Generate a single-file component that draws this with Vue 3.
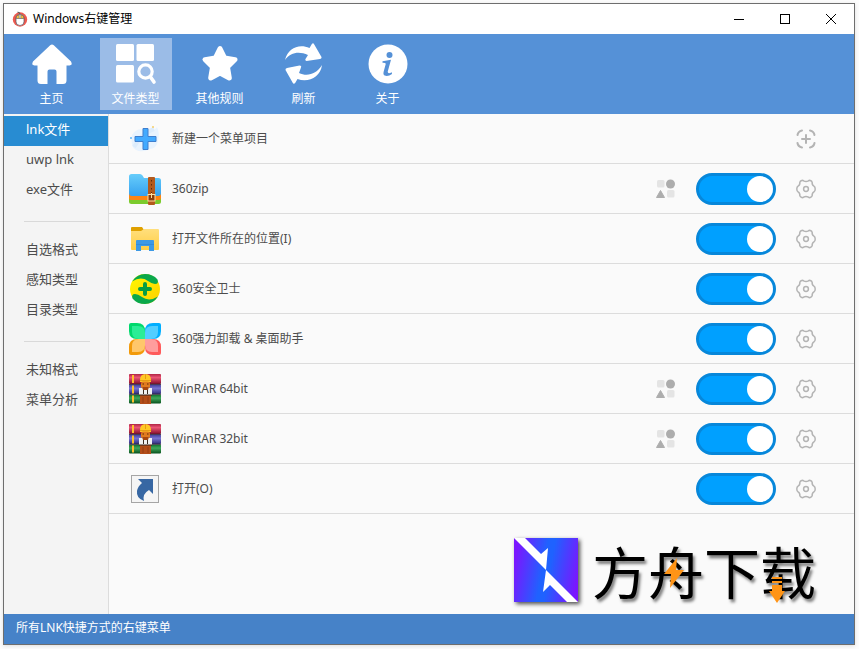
<template>
  <div class="desktop">
    <div class="window">
      <header class="titlebar">
        <svg class="app-icon" viewBox="0 0 16 16">
          <circle cx="8" cy="8.5" r="7.2" fill="#ee5a50" />
          <path d="M8 5V3Q8 1 5.5 1.2" fill="none" stroke="#555" stroke-width="1" />
          <rect x="4" y="3.6" width="8" height="10.800" rx="3.600" fill="#fff" stroke="#4d5560" stroke-width=".7" />
          <path d="M4.300 7.500V5.800Q4.800 4.100 6.600 4H9.400Q11.200 4.100 11.700 5.800V7.500z" fill="#f3bd3e" stroke="#4d5560" stroke-width=".6" />
          <rect x="7.200" y="3.600" width="1.600" height="3.800" rx=".8" fill="#fff" stroke="#4d5560" stroke-width=".5" />
        </svg>
        <h1 class="title">Windows右键管理</h1>
        <button class="win-btn" aria-label="最小化">
          <svg viewBox="0 0 12 12"><path d="M1 6.5h10" /></svg>
        </button>
        <button class="win-btn" aria-label="最大化">
          <svg viewBox="0 0 12 12"><rect x="1.5" y="1.5" width="9" height="9" /></svg>
        </button>
        <button class="win-btn" aria-label="关闭">
          <svg viewBox="0 0 12 12"><path d="M1 1l10 10M11 1L1 11" /></svg>
        </button>
      </header>

      <nav class="toolbar">
        <button
          v-for="tool in tools"
          :key="tool.id"
          class="tool"
          :class="{ active: activeTool === tool.id }"
          @click="activeTool = tool.id"
        >
          <svg viewBox="0 0 42 42">
            <path
              v-if="tool.id === 'home'"
              d="M19.2 2.2Q21 .6 22.8 2.2L40 18.6Q42 22.4 38.5 22.5H35.5V37.5Q35.5 41 32 41H25.5V28.5Q25.5 26.5 23.5 26.5H18.5Q16.5 26.5 16.5 28.5V41H10Q6.500 41 6.500 37.5V22.5H3.500Q0 22.400 2 18.600z"
              fill="#fff"
            />
            <g v-else-if="tool.id === 'types'" fill="#fff">
              <rect x="1" y="1" width="18" height="17" rx="1.500" />
              <rect x="21.500" y="1" width="17.500" height="17" rx="1.500" />
              <rect x="1" y="22" width="18" height="17.500" rx="1.500" />
              <circle cx="30.500" cy="28.500" r="6.700" fill="none" stroke="#fff" stroke-width="3.200" />
              <path d="M35.500 34l3.500 5" stroke="#fff" stroke-width="3.600" stroke-linecap="round" />
            </g>
            <path
              v-else-if="tool.id === 'rules'"
              d="M21 5.500l4.700 9.500 10.300 1.600-7.500 7.500 1.800 10.900-9.300-5-9.300 5 1.800-10.900-7.500-7.500 10.300-1.600z"
              fill="#fff"
              stroke="#fff"
              stroke-width="5"
              stroke-linejoin="round"
            />
            <g v-else-if="tool.id === 'refresh'" fill="#fff">
              <path d="M2 17C5 5.500 15.500 .5 26.500 5L29 .8Q30.300-.3 31.100 1.200L38.500 14Q38.800 15.600 37 16L23.500 18Q21.800 17.700 22.500 16L25 12C16.500 8 7.500 9 2 17z" />
              <path d="M39 22C37.500 34 25.500 40 14.500 36L12 40.300Q10.500 41.300 9.700 39.800L2.500 27Q2.200 25.300 4 24.900L16.500 22.500Q18.800 22.500 18 24.500L16 30C24.500 34 33.500 31 39 22z" />
            </g>
            <g v-else>
              <circle cx="21" cy="21" r="19.500" fill="#fff" />
              <circle cx="22.500" cy="12" r="3" fill="#5591d7" />
              <path d="M15.500 18.200Q20 17.500 24 16.800L20.700 28.800Q20.800 31.300 24.800 29.300L25 31Q21 33.800 17.700 32.600Q15.800 31.500 16.700 28.500L18.800 20.700Q18.500 19.600 15.500 19.700z" fill="#5591d7" />
            </g>
          </svg>
          <span>{{ tool.label }}</span>
        </button>
      </nav>

      <div class="body">
        <aside class="sidebar">
          <ul v-for="(group, i) in groups" :key="i">
            <li v-for="name in group" :key="name">
              <button class="side-item" :class="{ active: activeType === name }" @click="activeType = name">
                {{ name }}
              </button>
            </li>
          </ul>
        </aside>

        <main class="content">
          <ul class="list">
            <li class="row">
              <svg class="row-icon" viewBox="0 0 32 32">
                <path d="M3 12Q8 4 16 7t12-3q3 6 1 14t-8 8q-8 4-14 1T3 12z" fill="#e8f3fe" />
                <path d="M5 24q8-14 20-18" stroke="#dcecfc" stroke-width="4" fill="none" />
                <path d="M24 3v2" stroke="#f6ce68" stroke-width="1.500" />
                <path d="M1 15h2" stroke="#5db4fa" stroke-width="1.500" />
                <path d="M14 5.500h5v8h8v5h-8v8h-5v-8H6v-5h8z" fill="#42aaff" stroke="#3f7fce" stroke-width="1" stroke-linejoin="round" />
              </svg>
              <span class="name">新建一个菜单项目</span>
              <button class="icon-btn" aria-label="新建">
                <svg viewBox="0 0 20 20" fill="none" stroke="#b4b4b4" stroke-width="2" stroke-linecap="round">
                  <path d="M1.500 6Q2 2.500 6 1.500M14 1.500Q18 2.500 18.500 6M18.500 14Q18 17.500 14 18.500M6 18.500Q2 17.500 1.500 14M10 6v8M6 10h8" />
                </svg>
              </button>
            </li>

            <li v-for="(item, i) in items" :key="item.name" class="row">
              <svg class="row-icon" viewBox="0 0 32 32">
                <template v-if="item.icon === 'zip'">
                  <rect y="21" width="32" height="10" rx="2.500" fill="#7bcb2d" />
                  <path d="M0 20h32v5q0 2-2 2H2q-2 0-2-2z" fill="#ff8412" />
                  <path d="M0 3.500Q0 1 2.500 1H11q1.500 0 2.500 1.500L15 5h14.500Q32 5 32 7.500V20q0 3-3 3H3q-3 0-3-3z" fill="url(#zipBlue)" />
                  <rect x="19" y="4" width="7" height="28" rx="1" fill="#b35a1c" />
                  <path d="M22.500 7v13" stroke="#602b0c" stroke-dasharray="1.500 2.500" />
                  <rect x="19" y="21.500" width="7" height="6.500" fill="#8b3d0c" stroke="#ffe0a0" />
                  <path d="M22.500 20v5" stroke="#ffe0a0" />
                </template>
                <template v-else-if="item.icon === 'folder'">
                  <path d="M2 5q0-1 1-1h10l2 3-2 3H2z" fill="#dfa000" />
                  <path d="M2 8h10l3-2h14q1 0 1 1v19q0 1-1 1H3q-1 0-1-1z" fill="url(#folderYellow)" />
                  <path d="M7 28V18q0-1 1-1h16q1 0 1 1v10h-5v-5h-8v5z" fill="#3d99e4" />
                  <path d="M7 21.500h18" stroke="#2d83d0" stroke-width=".6" />
                </template>
                <template v-else-if="item.icon === 'safe'">
                  <circle cx="16" cy="16" r="15" fill="url(#safeYellow)" />
                  <path
                    v-for="angle in [0, 180]"
                    :key="angle"
                    :transform="`rotate(${angle} 16 16)`"
                    d="M3 8.500Q8 1 16 1q8 0 12.500 5.500 1.500 4.500-2.500 4.500-3 0-7-3Q12 2.800 3 8.500z"
                    fill="#0aa84b"
                  />
                  <path d="M16 11v10M11 16h10" stroke="#089d43" stroke-width="4" stroke-linecap="round" />
                </template>
                <template v-else-if="item.icon === 'clover'">
                  <g v-for="petal in petals" :key="petal.edge" :transform="`rotate(${petal.angle} 16 16)`">
                    <path d="M0 2q0-2 2-2h6q8 0 8 8v8H8q-8 0-8-8z" :fill="petal.edge" />
                    <path d="M3 3h6q7 0 7 7v6h-6q-7 0-7-7z" :fill="petal.fill" />
                  </g>
                </template>
                <template v-else-if="item.icon === 'rar'">
                  <rect y="1" width="32" height="10" rx="1" fill="url(#bookRed)" />
                  <rect y="11.500" width="32" height="9.500" rx="1" fill="url(#bookBlue)" />
                  <rect y="21.500" width="32" height="9" rx="1" fill="url(#bookGreen)" />
                  <path d="M0 11.300h32M0 21.200h32" stroke="#34243c" />
                  <path d="M4 2v8M4 12.500v8M4 22.500v7" stroke="#ffc02c" stroke-width="2" />
                  <path d="M11 20h11v11H11z" fill="#b34d18" />
                  <path d="M11 7Q11 1 16.500 1T22 7v2H11z" fill="#ffc824" />
                  <path d="M11 7.500h11M16.500 1v5" fill="none" stroke="#e59a18" />
                  <rect x="12" y="8.500" width="9" height="7" rx="2" fill="#e07a20" />
                  <path d="M13.500 11h1.500M18 11h1.500" stroke="#5a2608" />
                  <path d="M10 15h3v-1h7v1h3v7H10z" fill="#f1f1f1" />
                  <path d="M13 14h7l-1 3h-5z" fill="#a8470f" />
                  <path d="M14.500 17v4M18.500 17v4" stroke="#3a2a22" />
                  <path d="M10 22h13" stroke="#3a2218" />
                  <path d="M14 24v6M19 24v6" stroke="#943c10" />
                </template>
                <template v-else>
                  <rect x="2.500" y="2.500" width="27" height="27" fill="#f5f5f5" stroke="#a5a5a5" />
                  <path d="M9 6H24v15l-4-4q-7 4-5 11-8-3-7-10 1-5 5-8z" fill="#3767a3" />
                </template>
              </svg>
              <label class="name" :for="'switch' + i">{{ item.name }}</label>
              <button v-if="item.multi" class="icon-btn" aria-label="分组">
                <svg viewBox="0 0 20 20">
                  <rect x="1" y="1" width="7.500" height="7.500" rx="1.500" fill="#e4e4e4" />
                  <circle cx="14.500" cy="5" r="4.500" fill="#adadad" />
                  <path d="M4.500 11.500L8.500 18.500H.5z" fill="#adadad" stroke="#adadad" stroke-linejoin="round" />
                  <rect x="11" y="11" width="7.500" height="7.500" rx="1.500" fill="#e4e4e4" />
                </svg>
              </button>
              <input :id="'switch' + i" v-model="item.enabled" class="switch" type="checkbox" />
              <button class="icon-btn" aria-label="设置">
                <svg viewBox="0 0 20 20" fill="none" stroke="#b4b4b4" stroke-width="1.500" stroke-linejoin="round">
                  <path d="M6.300 1.300Q7 1.300 7.600 1.900Q10 3.300 12.400 1.900Q13 1.300 13.700 1.300Q16 2 16.200 3.400Q15.800 5.900 18 7.200Q19.200 7.700 19.200 10T18 12.800Q15.800 14.100 16.200 16.600Q16 18 13.700 18.700Q13 18.700 12.400 18.100Q10 16.700 7.600 18.100Q7 18.700 6.300 18.700Q4 18 3.800 16.600Q4.200 14.100 2 12.800Q.8 12.300 .8 10T2 7.200Q4.200 5.900 3.800 3.400Q4 2 6.300 1.300z" />
                  <circle cx="10" cy="10" r="2.400" />
                </svg>
              </button>
            </li>
          </ul>

          <div class="brand">
            <svg class="brand-logo" viewBox="0 0 64 64">
              <rect width="64" height="64" fill="url(#brandFill)" />
              <path d="M0 0H11L27 16 34 10 32 32z" fill="#fff" />
              <path d="M64 64H53L36 47 29 54 32 32z" fill="#fff" />
            </svg>
            <div class="brand-text">
              方舟下载
              <svg class="brand-bolt" viewBox="0 0 20 30">
                <path d="M13 0L0 16h7L6 30 20 12h-8z" fill="#ff9416" />
              </svg>
              <svg class="brand-arrow" viewBox="0 0 16 26">
                <path d="M3 0h10v2H3zM3 4h10v2H3zM3 8h10v6h3L8 26 0 14h3z" fill="#ff9416" />
              </svg>
            </div>
          </div>
        </main>
      </div>

      <footer class="statusbar">所有LNK快捷方式的右键菜单</footer>
    </div>

    <!-- 图标共用的渐变 -->
    <svg class="defs" width="0" height="0" aria-hidden="true">
      <defs>
        <linearGradient id="zipBlue" x2="0" y2="1"><stop stop-color="#67cdfb" /><stop offset="1" stop-color="#36a2ef" /></linearGradient>
        <linearGradient id="folderYellow" x2="0" y2="1"><stop stop-color="#ffdf7d" /><stop offset="1" stop-color="#ffce45" /></linearGradient>
        <linearGradient id="safeYellow" x2="1" y2="1"><stop stop-color="#fff800" /><stop offset="1" stop-color="#ffd000" /></linearGradient>
        <linearGradient id="bookRed" x2="0" y2="1"><stop stop-color="#b02444" /><stop offset=".35" stop-color="#ea5575" /><stop offset="1" stop-color="#850e2a" /></linearGradient>
        <linearGradient id="bookBlue" x2="0" y2="1"><stop stop-color="#3d3b96" /><stop offset=".4" stop-color="#7874d2" /><stop offset="1" stop-color="#2e2c7c" /></linearGradient>
        <linearGradient id="bookGreen" x2="0" y2="1"><stop stop-color="#0c702c" /><stop offset=".4" stop-color="#40a75b" /><stop offset="1" stop-color="#07501c" /></linearGradient>
        <linearGradient id="brandFill" x1="0" y1=".4" x2="1" y2=".6">
          <stop stop-color="#7a16ff" />
          <stop offset=".45" stop-color="#1f62ff" />
          <stop offset=".55" stop-color="#1f62ff" />
          <stop offset="1" stop-color="#7a16ff" />
        </linearGradient>
      </defs>
    </svg>
  </div>
</template>

<script setup>
import { ref } from 'vue'

const tools = [
  { id: 'home', label: '主页' },
  { id: 'types', label: '文件类型' },
  { id: 'rules', label: '其他规则' },
  { id: 'refresh', label: '刷新' },
  { id: 'about', label: '关于' },
]
const activeTool = ref('types')

// 侧边栏按分隔线分组
const groups = [
  ['lnk文件', 'uwp lnk', 'exe文件'],
  ['自选格式', '感知类型', '目录类型'],
  ['未知格式', '菜单分析'],
]
const activeType = ref('lnk文件')

const items = ref([
  { name: '360zip', icon: 'zip', multi: true, enabled: true },
  { name: '打开文件所在的位置(I)', icon: 'folder', enabled: true },
  { name: '360安全卫士', icon: 'safe', enabled: true },
  { name: '360强力卸载 & 桌面助手', icon: 'clover', enabled: true },
  { name: 'WinRAR 64bit', icon: 'rar', multi: true, enabled: true },
  { name: 'WinRAR 32bit', icon: 'rar', multi: true, enabled: true },
  { name: '打开(O)', icon: 'link', enabled: true },
])

// 四叶图标的花瓣，从左上角开始顺时针
const petals = [
  { angle: 0, edge: '#00d96d', fill: '#2bed96' },
  { angle: 90, edge: '#00aeff', fill: '#52ceff' },
  { angle: 180, edge: '#ff5b5b', fill: '#ff9d9d' },
  { angle: 270, edge: '#f29a0a', fill: '#ffc76b' },
]
</script>

<style>
body {
  margin: 0;
  background: #fff;
}
</style>

<style scoped>
.desktop {
  box-sizing: border-box;
  height: 100vh;
  padding: 3px 4px 4px 3px;
  background: #fcfcfc;
  font-family: "Noto Sans", "Noto Sans CJK SC", sans-serif;
  font-size: 12px;
  color: #4c4c4c;
}

.window {
  box-sizing: border-box;
  display: flex;
  flex-direction: column;
  height: 100%;
  border: 1px solid #6e6e6e;
  background: #fafafa;
  box-shadow: 0 1px 4px rgba(0, 0, 0, 0.12);
}

button {
  padding: 0;
  border: 0;
  background: none;
  font: inherit;
  color: inherit;
}

ul {
  margin: 0;
  padding: 0;
  list-style: none;
}

svg {
  display: block;
}

/* 标题栏 */
.titlebar {
  display: flex;
  align-items: center;
  height: 30px;
  padding-left: 8px;
  background: #fff;
  color: #000;
}

.app-icon {
  width: 16px;
  height: 16px;
}

.title {
  flex: 1;
  margin: 0 0 0 5px;
  font-size: 12px;
  font-weight: 400;
  line-height: 16px;
}

.win-btn {
  display: flex;
  align-items: center;
  justify-content: center;
  width: 46px;
  height: 30px;
}

.win-btn svg {
  width: 12px;
  height: 12px;
  fill: none;
  stroke: #000;
}

/* 工具栏 */
.toolbar {
  display: flex;
  gap: 12px;
  height: 72px;
  padding: 4px 12px;
  background: #5591d7;
}

.tool {
  display: flex;
  flex-direction: column;
  align-items: center;
  gap: 5px;
  width: 72px;
  padding: 5px 1px 0 0;
  color: #fff;
  line-height: 18px;
}

.tool svg {
  width: 42px;
  height: 42px;
}

.tool.active {
  background: #9bbce7;
}

.body {
  flex: 1;
  display: flex;
  min-height: 0;
}

/* 侧边栏 */
.sidebar {
  width: 104px;
  padding-top: 2px;
  border-right: 1px solid #dcdcdc;
  background: #f4f4f4;
}

.sidebar ul + ul::before {
  content: '';
  display: block;
  height: 1px;
  margin: 15px 18px 14px 20px;
  background: #d9d9d9;
}

.side-item {
  display: block;
  width: 100%;
  height: 30px;
  padding: 0 0 3px 22px;
  font-size: 13px;
  line-height: 27px;
  text-align: left;
}

.side-item.active {
  background: #288cd2;
  color: #fff;
}

/* 菜单项列表 */
.content {
  flex: 1;
  display: flex;
  flex-direction: column;
  justify-content: space-between;
}

.row {
  box-sizing: border-box;
  display: flex;
  align-items: center;
  gap: 20px;
  height: 50px;
  padding: 0 38px 0 20px;
  border-bottom: 1px solid #dcdcdc;
}

.row-icon {
  width: 32px;
  height: 32px;
  margin-right: -9px;
}

.name {
  flex: 1;
  line-height: 18px;
}

.icon-btn,
.icon-btn svg {
  width: 20px;
  height: 20px;
}

.switch {
  appearance: none;
  box-sizing: border-box;
  width: 80px;
  height: 32px;
  margin: 0;
  padding: 0;
  border: 3px solid #b0b0b0;
  border-radius: 16px;
  background: #ccc;
}

.switch::before {
  content: '';
  display: block;
  width: 26px;
  height: 26px;
  border-radius: 50%;
  background: #fff;
}

.switch:checked {
  border-color: #0787da;
  background: #00a0ff;
}

.switch:checked::before {
  margin-left: auto;
}

/* 右下角标志 */
.brand {
  display: flex;
  align-items: center;
  align-self: flex-end;
  gap: 14px;
  padding: 0 38px 12px 0;
}

.brand-logo {
  width: 64px;
  height: 64px;
  filter: drop-shadow(2px 2px 2px rgba(0, 0, 0, 0.7));
}

.brand-text {
  position: relative;
  font-family: "Noto Sans CJK SC", sans-serif;
  font-size: 56px;
  font-weight: 400;
  line-height: 64px;
  color: #000;
  text-shadow: 2px 3px 3px rgba(0, 0, 0, 0.5);
}

.brand-bolt {
  position: absolute;
  left: 72px;
  top: 20px;
  width: 20px;
  height: 30px;
}

.brand-arrow {
  position: absolute;
  left: 177px;
  top: 39px;
  width: 16px;
  height: 26px;
}

.statusbar {
  height: 30px;
  padding-left: 12px;
  background: #4682c8;
  color: #fff;
  line-height: 28px;
}

.defs {
  position: absolute;
}
</style>
